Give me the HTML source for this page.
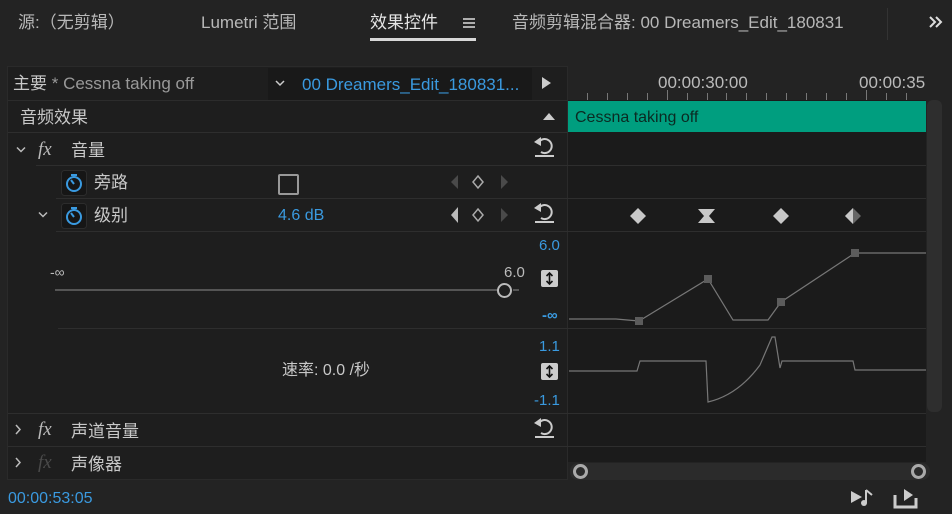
<!DOCTYPE html><html><head><meta charset="utf-8"><style>
*{margin:0;padding:0;box-sizing:border-box}
body{width:952px;height:514px;background:#232323;position:relative;overflow:hidden;font-family:"Liberation Sans","Noto Sans CJK SC",sans-serif;color:#bdbdbd;line-height:1.15}
.a{position:absolute;white-space:nowrap}
.t{font-size:17px}
.blue{color:#3a9ae0}
.line{position:absolute;height:1px;background:#2e2e2e}
</style></head><body>
<!-- tabs -->
<div class="a t" style="left:18px;top:13px;color:#b8b8b8">源:（无剪辑）</div>
<div class="a t" style="left:201px;top:13px;color:#b8b8b8">Lumetri 范围</div>
<div class="a t" style="left:370px;top:13px;color:#e6e6e6">效果控件</div>
<svg class="a" style="left:462px;top:17px" width="14" height="12"><path d="M1 2h12M1 6h12M1 10h12" stroke="#ddd" stroke-width="1.5"/></svg>
<div class="a" style="left:370px;top:38px;width:106px;height:3px;background:#d8d8d8"></div>
<div class="a t" style="left:512px;top:13px;color:#b8b8b8">音频剪辑混合器: 00 Dreamers_Edit_180831</div>
<div class="a" style="left:887px;top:8px;width:1px;height:32px;background:#333"></div>
<svg class="a" style="left:928px;top:15px" width="16" height="14"><path d="M2 2l5 5-5 5M8 2l5 5-5 5" stroke="#ddd" stroke-width="2" fill="none"/></svg>
<!-- left panel -->
<div class="a" style="left:7px;top:66px;width:561px;height:414px;background:#1e1e1e;border:1px solid #2a2a2a"></div>
<div class="a t" style="left:13px;top:74px;color:#c8c8c8">主要 <span style="color:#999">* Cessna taking off</span></div>
<div class="a" style="left:268px;top:68px;width:264px;height:32px;background:#191919"></div>
<svg class="a" style="left:275px;top:80px" width="10" height="7"><path d="M1 1l4 4 4-4" stroke="#ccc" stroke-width="1.5" fill="none"/></svg>
<div class="a t blue" style="left:302px;top:75px">00 Dreamers_Edit_180831...</div>
<svg class="a" style="left:540px;top:76px" width="12" height="14"><path d="M2 1 L11 7 L2 13Z" fill="#ccc"/></svg>
<div class="line" style="left:8px;top:100px;width:560px;background:#2c2c2c"></div>
<div class="a t" style="left:20px;top:108px;color:#c8c8c8">音频效果</div>
<svg class="a" style="left:542px;top:111px" width="14" height="10"><path d="M1 9 L7 2 L13 9Z" fill="#ccc"/></svg>
<div class="line" style="left:8px;top:132px;width:560px"></div>
<!-- rows -->
<svg class="a" style="left:16px;top:146px" width="10" height="8"><path d="M1 1.5l4 4 4-4" stroke="#bbb" stroke-width="1.5" fill="none"/></svg>
<div class="a" style="left:38px;top:139px;font-size:19px;font-style:italic;font-family:'Liberation Serif',serif;color:#bbb">fx</div>
<div class="a t" style="left:71px;top:141px;color:#c8c8c8">音量</div>
<div class="line" style="left:36px;top:165px;width:532px"></div>
<svg class="a" style="left:61px;top:170px" width="26" height="26"><rect x="0.5" y="0.5" width="25" height="25" rx="3" fill="#161616" stroke="#2c2c2c"/><circle cx="13" cy="14" r="7" fill="none" stroke="#3a9ae0" stroke-width="2"/><path d="M10 5h6M13 14l-3-4" stroke="#3a9ae0" stroke-width="2"/></svg>
<div class="a t" style="left:94px;top:173px;color:#c8c8c8">旁路</div>
<div class="a" style="left:278px;top:174px;width:21px;height:21px;border:2px solid #999;border-radius:2px"></div>
<div class="line" style="left:56px;top:198px;width:512px"></div>
<svg class="a" style="left:38px;top:211px" width="10" height="8"><path d="M1 1.5l4 4 4-4" stroke="#bbb" stroke-width="1.5" fill="none"/></svg>
<svg class="a" style="left:61px;top:203px" width="26" height="26"><rect x="0.5" y="0.5" width="25" height="25" rx="3" fill="#161616" stroke="#2c2c2c"/><circle cx="13" cy="14" r="7" fill="none" stroke="#3a9ae0" stroke-width="2"/><path d="M10 5h6M13 14l-3-4" stroke="#3a9ae0" stroke-width="2"/></svg>
<div class="a t" style="left:94px;top:206px;color:#c8c8c8">级别</div>
<div class="a t blue" style="left:278px;top:207px;font-size:16px">4.6 dB</div>
<svg class="a" style="left:446px;top:174px" width="66" height="52">
<path d="M12 1 L5 8 L12 15Z" fill="#4a4a4a"/><path d="M32 2 L37 8 L32 14 L27 8Z" fill="none" stroke="#aaa" stroke-width="1.5"/><path d="M55 1 L62 8 L55 15Z" fill="#4a4a4a"/>
<path d="M12 33 L5 41 L12 49Z" fill="#bbb"/><path d="M32 35 L37 41 L32 47 L27 41Z" fill="none" stroke="#aaa" stroke-width="1.5"/><path d="M55 34 L62 41 L55 48Z" fill="#4a4a4a"/></svg>
<svg class="a" style="left:532px;top:135px" width="24" height="24"><path d="M7 7 A7 7 0 1 1 9 17" fill="none" stroke="#ccc" stroke-width="2"/><path d="M2 7 L9 2 L9 11Z" fill="#ccc"/><rect x="3" y="20" width="19" height="2" fill="#ccc"/></svg>
<svg class="a" style="left:532px;top:201px" width="24" height="24"><path d="M7 7 A7 7 0 1 1 9 17" fill="none" stroke="#ccc" stroke-width="2"/><path d="M2 7 L9 2 L9 11Z" fill="#ccc"/><rect x="3" y="20" width="19" height="2" fill="#ccc"/></svg>
<div class="line" style="left:56px;top:231px;width:512px"></div>
<!-- slider area -->
<div class="a blue" style="left:539px;top:237px;font-size:15px">6.0</div>
<div class="a" style="left:50px;top:264px;font-size:14px;color:#bbb">-∞</div>
<div class="a" style="left:504px;top:264px;font-size:15px;color:#bbb">6.0</div>
<div class="a" style="left:55px;top:289px;width:443px;height:2px;background:#555"></div>
<div class="a" style="left:513px;top:289px;width:6px;height:2px;background:#555"></div>
<div class="a" style="left:497px;top:283px;width:15px;height:15px;border:2.5px solid #bbb;border-radius:50%;background:#1e1e1e"></div>
<svg class="a" style="left:541px;top:270px" width="17" height="17"><rect width="17" height="17" rx="2" fill="#ccc"/><path d="M8.5 3v11M5.5 6l3-3 3 3M5.5 11l3 3 3-3" stroke="#111" stroke-width="1.6" fill="none"/></svg>
<div class="a blue" style="left:542px;top:307px;font-size:15px;font-weight:bold">-∞</div>
<div class="line" style="left:58px;top:328px;width:510px"></div>
<div class="a blue" style="left:539px;top:338px;font-size:15px">1.1</div>
<div class="a t" style="left:282px;top:362px;font-size:16px;color:#c8c8c8">速率: 0.0 /秒</div>
<svg class="a" style="left:541px;top:363px" width="17" height="17"><rect width="17" height="17" rx="2" fill="#ccc"/><path d="M8.5 3v11M5.5 6l3-3 3 3M5.5 11l3 3 3-3" stroke="#111" stroke-width="1.6" fill="none"/></svg>
<div class="a blue" style="left:534px;top:392px;font-size:15px">-1.1</div>
<div class="line" style="left:8px;top:413px;width:560px"></div>
<svg class="a" style="left:14px;top:424px" width="8" height="11"><path d="M2 1l4 4.5-4 4.5" stroke="#bbb" stroke-width="1.5" fill="none"/></svg>
<div class="a" style="left:38px;top:419px;font-size:19px;font-style:italic;font-family:'Liberation Serif',serif;color:#bbb">fx</div>
<div class="a t" style="left:71px;top:422px;color:#c8c8c8">声道音量</div>
<svg class="a" style="left:532px;top:416px" width="24" height="24"><path d="M7 7 A7 7 0 1 1 9 17" fill="none" stroke="#ccc" stroke-width="2"/><path d="M2 7 L9 2 L9 11Z" fill="#ccc"/><rect x="3" y="20" width="19" height="2" fill="#ccc"/></svg>
<div class="line" style="left:8px;top:446px;width:560px"></div>
<svg class="a" style="left:14px;top:457px" width="8" height="11"><path d="M2 1l4 4.5-4 4.5" stroke="#bbb" stroke-width="1.5" fill="none"/></svg>
<div class="a" style="left:38px;top:452px;font-size:19px;font-style:italic;font-family:'Liberation Serif',serif;color:#4a4a4a">fx</div>
<div class="a t" style="left:71px;top:455px;color:#c8c8c8">声像器</div>
<div class="a blue" style="left:8px;top:490px;font-size:16px">00:00:53:05</div>
<!-- timeline -->
<div class="a" style="left:568px;top:100px;width:358px;height:362px;background:#1b1b1b"></div>
<div class="a" style="left:658px;top:73px;font-size:17px;color:#bbb">00:00:30:00</div>
<div class="a" style="left:859px;top:73px;font-size:17px;color:#bbb;width:68px;overflow:hidden">00:00:35</div>
<svg class="a" style="left:568px;top:90px" width="358" height="10"><g stroke="#777" stroke-width="1">
<path d="M19.5 3v7M39.5 3v7M59.5 3v7M79.5 3v7M99.5 0v10M119.5 3v7M139.5 3v7M158.5 3v7M178.5 3v7M198.5 3v7M218.5 3v7M238.5 3v7M258.5 3v7M278.5 3v7M298.5 0v10M318.5 3v7M338.5 3v7"/></g></svg>
<div class="a" style="left:568px;top:101px;width:358px;height:31px;background:#009e7f"></div>
<div class="a" style="left:575px;top:109px;font-size:16px;color:#0b2a22">Cessna taking off</div>
<div class="line" style="left:568px;top:165px;width:358px"></div>
<div class="line" style="left:568px;top:198px;width:358px"></div>
<div class="line" style="left:568px;top:231px;width:358px"></div>
<div class="line" style="left:568px;top:328px;width:358px"></div>
<div class="line" style="left:568px;top:413px;width:358px"></div>
<div class="line" style="left:568px;top:446px;width:358px"></div>
<svg class="a" style="left:568px;top:200px" width="358" height="210">
<g fill="#c8c8c8"><path d="M70 8 L78 16 L70 24 L62 16Z"/><path d="M130 9 H147 L141 16 L147 23 H130 L136 16Z"/><path d="M213 8 L221 16 L213 24 L205 16Z"/><path d="M285 8 L293 16 L285 24 L277 16Z" fill="#666"/><path d="M285 8 L285 24 L277 16Z"/></g>
<path d="M1 119 H48 L71 121 L140 79 L165 120 H200 L213 102 L287 53 H358" fill="none" stroke="#777" stroke-width="1.2"/>
<g fill="#5c5c5c"><rect x="67" y="117" width="8" height="8"/><rect x="136" y="75" width="8" height="8"/><rect x="209" y="98" width="8" height="8"/><rect x="283" y="49" width="8" height="8"/></g>
<path d="M1 171 H69 L72 161 H138 L140 202 Q170 195 192 165 L204 137 L207 137 L212 168 L214 161 H285 L287 170 H358" fill="none" stroke="#777" stroke-width="1.2"/>
</svg>
<div class="a" style="left:927px;top:100px;width:15px;height:312px;background:#2e2e2e;border-radius:6px"></div>
<div class="a" style="left:570px;top:463px;width:360px;height:17px;background:#2b2b2b;border-radius:8px"></div>
<div class="a" style="left:573px;top:464px;width:15px;height:15px;border:3px solid #aaa;border-radius:50%"></div>
<div class="a" style="left:911px;top:464px;width:15px;height:15px;border:3px solid #aaa;border-radius:50%"></div>
<svg class="a" style="left:850px;top:488px" width="26" height="20"><path d="M1 3 L12 9 L1 15Z" fill="#ccc"/><path d="M16 2 V15 M16 2 L22 7" stroke="#ccc" stroke-width="2" fill="none"/><circle cx="14" cy="15" r="3" fill="#ccc"/></svg>
<svg class="a" style="left:893px;top:487px" width="26" height="22"><path d="M2 8 V20 H23 V11" fill="none" stroke="#ccc" stroke-width="3"/><path d="M11 2 V14 L20 8Z" fill="#ccc"/></svg>
</body></html>
